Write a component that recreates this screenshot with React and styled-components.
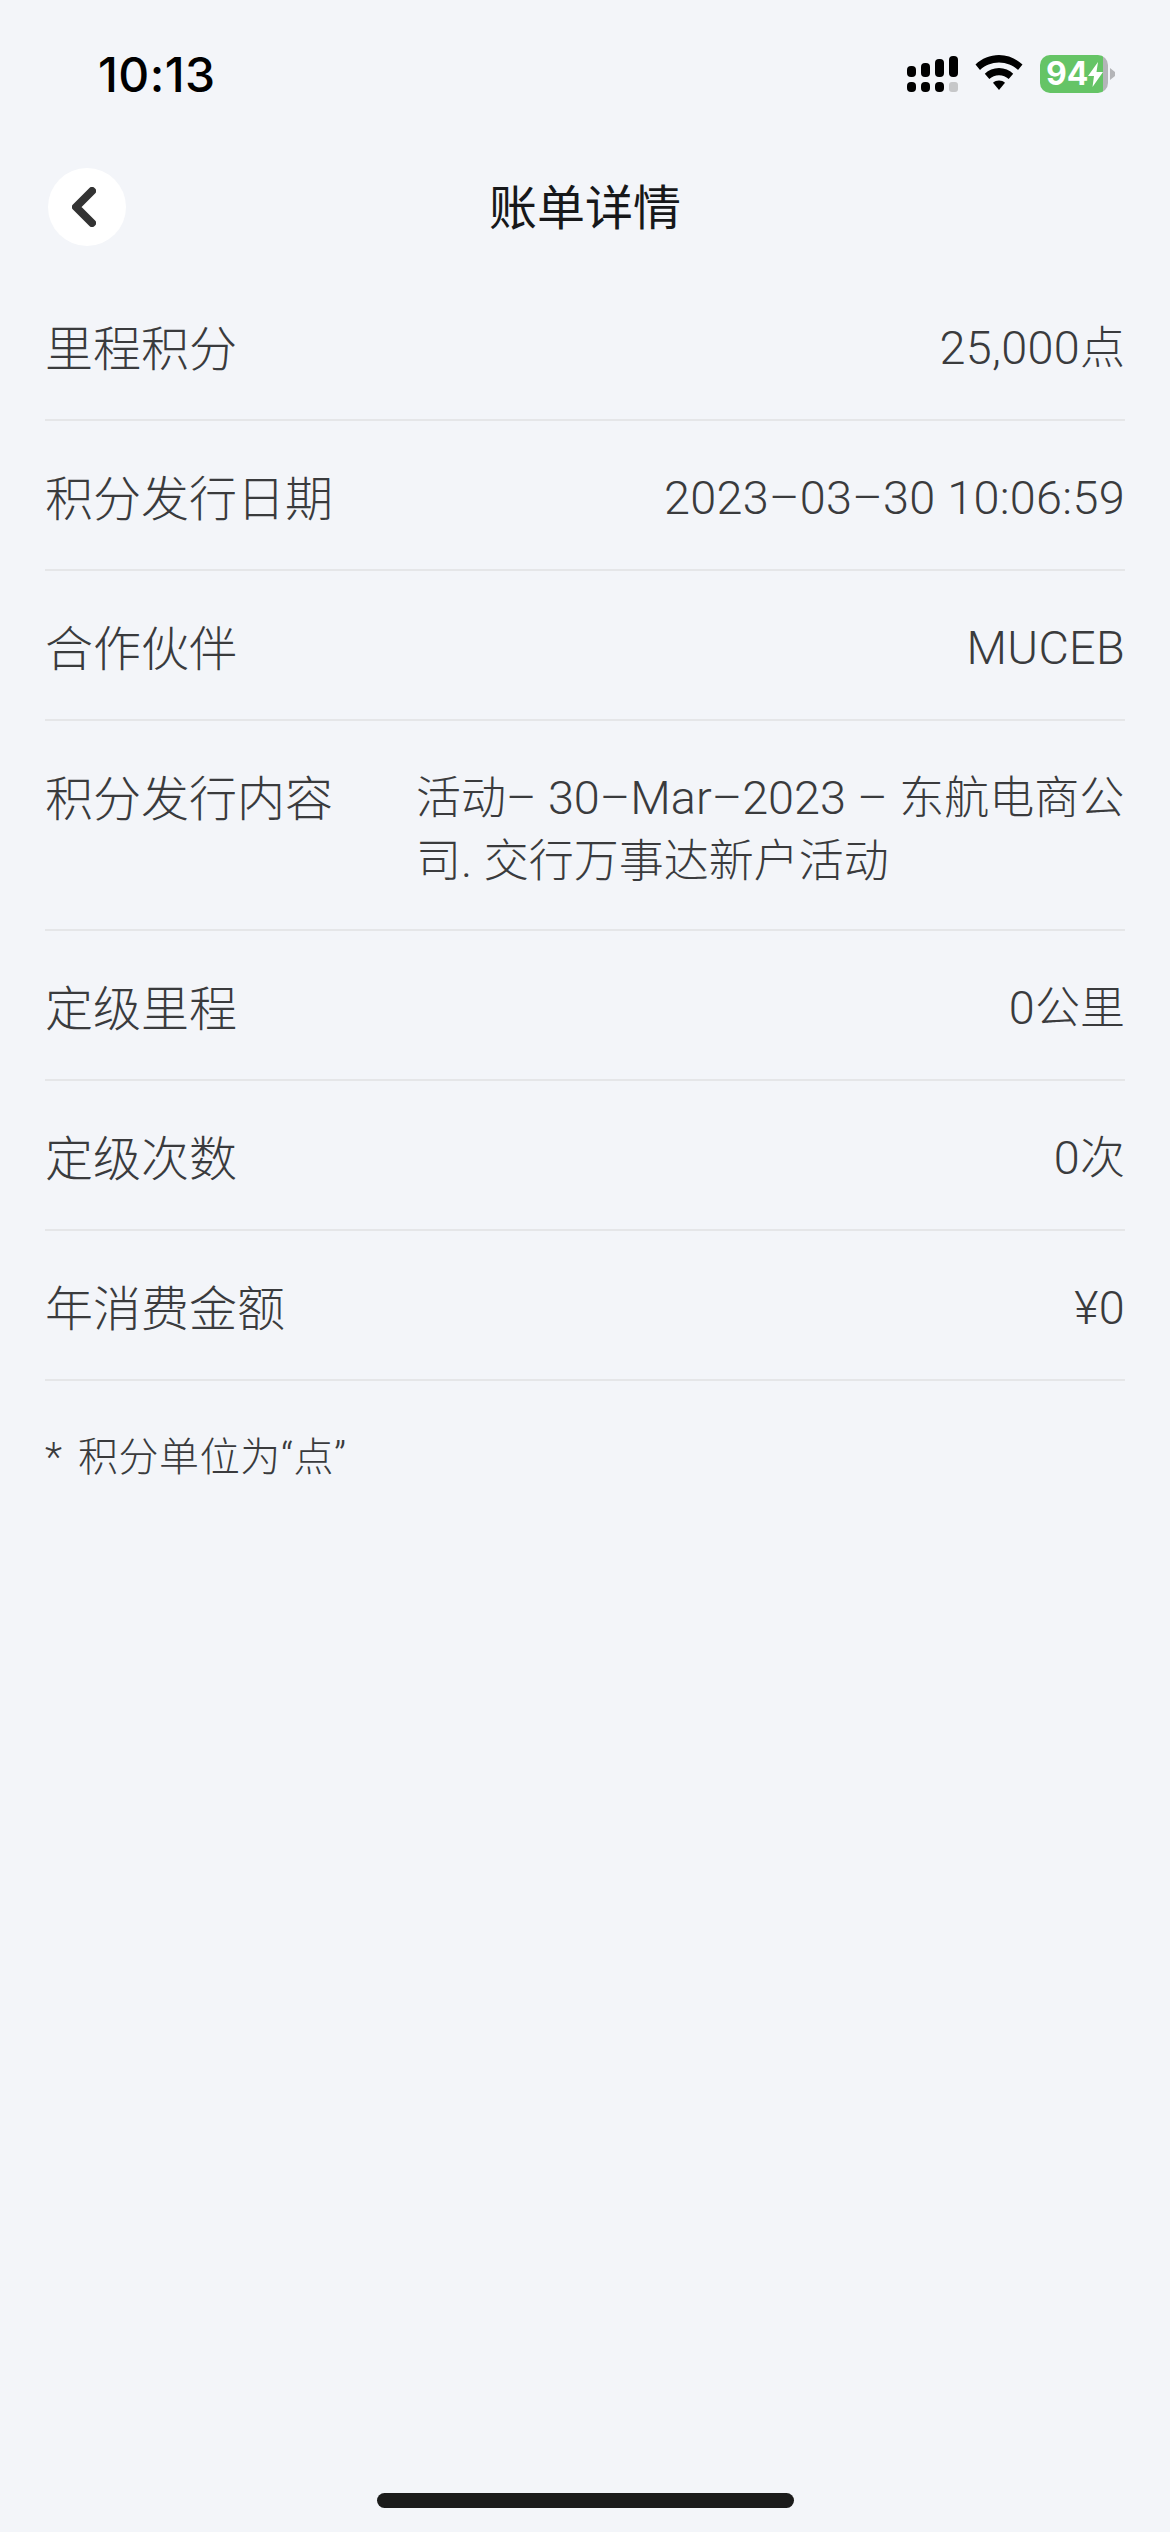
import React from "react";
import styled, { createGlobalStyle } from "styled-components";

const GlobalStyle = createGlobalStyle`
  html, body {
    margin: 0;
    padding: 0;
    background: #f3f5f9;
  }
  * {
    box-sizing: border-box;
  }
`;

const Page = styled.div`
  position: relative;
  width: 1170px;
  height: 2532px;
  background: #f3f5f9;
  overflow: hidden;
  font-family: "Roboto", "Noto Sans CJK SC", sans-serif;
  color: #3a3b3d;
`;

const StatusBar = styled.div`
  height: 150px;
  display: flex;
  justify-content: space-between;
  align-items: flex-start;
  padding: 55px 55px 0 98px;
`;

const Time = styled.div`
  font-family: "Inter", sans-serif;
  font-size: 48px;
  line-height: 40px;
  font-weight: 500;
  letter-spacing: 0.4px;
  color: #000;
`;

const StatusIcons = styled.div`
  display: flex;
  align-items: flex-start;
  gap: 17px;
`;

const Battery = styled.div`
  display: flex;
  align-items: center;
  gap: 2px;
`;

const BatteryBody = styled.div`
  width: 68px;
  height: 38px;
  border-radius: 10px;
  background: linear-gradient(to right, #65c466 93%, #b4b5b8 93%);
  color: #fff;
  display: flex;
  align-items: center;
  padding-left: 6px;
  font-family: "Inter", sans-serif;
  font-size: 32px;
  line-height: 38px;
  font-weight: 700;
`;

const Nav = styled.div`
  position: relative;
  height: 114px;
  display: flex;
  align-items: center;
  justify-content: center;
  padding-top: 4px;
`;

const BackButton = styled.button`
  position: absolute;
  left: 48px;
  top: 18px;
  width: 78px;
  height: 78px;
  border: 0;
  padding: 0 6px 0 0;
  border-radius: 50%;
  background: #fff;
  display: flex;
  align-items: center;
  justify-content: center;
`;

const Title = styled.div`
  font-size: 48px;
  line-height: 64px;
  color: #17181a;
  font-weight: 400;
`;

const List = styled.div`
  padding: 7px 45px 0;
`;

const Row = styled.div`
  display: flex;
  justify-content: space-between;
  align-items: flex-start;
  gap: 83px;
  padding: 46px 0 36px;
  border-bottom: 2px solid #e5e6e8;
`;

const Label = styled.div`
  flex: none;
  font-size: 48px;
  line-height: 66px;
  font-weight: 300;
`;

const Value = styled.div`
  font-size: 46.8px;
  line-height: 63px;
  font-weight: 300;
  letter-spacing: ${(p) => (p.$wrap ? "0" : "0.3px")};
  text-align: ${(p) => (p.$wrap ? "left" : "right")};
`;

const Han = styled.span`
  font-size: 45px;
  line-height: 1;
  letter-spacing: 0;
`;

const Note = styled.div`
  padding: 49px 45px 0;
  font-size: 40px;
  line-height: 56px;
  font-weight: 300;
  letter-spacing: 0.6px;
  word-spacing: 5px;
`;

const HomeIndicator = styled.div`
  position: absolute;
  left: 377px;
  bottom: 24px;
  width: 417px;
  height: 15px;
  border-radius: 8px;
  background: #1b1b1b;
`;

const rows = [
  { label: "里程积分", value: "25,000点" },
  { label: "积分发行日期", value: "2023–03–30 10:06:59" },
  { label: "合作伙伴", value: "MUCEB" },
  {
    label: "积分发行内容",
    value: "活动– 30–Mar–2023 – 东航电商公司. 交行万事达新户活动",
    wrap: true,
  },
  { label: "定级里程", value: "0公里" },
  { label: "定级次数", value: "0次" },
  { label: "年消费金额", value: "¥0" },
];

const splitRuns = (text) =>
  text
    .split(/([\u4e00-\u9fff]{1,5})/)
    .map((run, i) => (i % 2 ? <Han key={i}>{run}</Han> : run));

const SignalIcon = () => (
  <svg width="51" height="38" viewBox="0 0 51 38">
    <g fill="#000">
      <rect x="0" y="11" width="9" height="11" rx="4" />
      <rect x="14" y="8" width="9" height="14" rx="4" />
      <rect x="28" y="4" width="9" height="18" rx="4" />
      <rect x="42" y="1" width="9" height="21" rx="4" />
      <rect x="0" y="27" width="9" height="10" rx="4" />
      <rect x="14" y="27" width="9" height="10" rx="4" />
      <rect x="28" y="27" width="9" height="10" rx="4" />
    </g>
    <rect x="42" y="27" width="9" height="10" rx="3" fill="#c6c7c9" />
  </svg>
);

const WifiIcon = () => (
  <svg width="48" height="36" viewBox="0 0 48 36">
    <path
      d="M24 0C15 0 7 3.500 0.500 9.500L5 15C10 10.300 16.700 7.500 24 7.500S38 10.300 43 15L47.500 9.500C41 3.500 33 0 24 0Z"
      fill="#000"
    />
    <path
      d="M24 13C18.500 13 13.500 15.200 9.800 18.700L14.300 24C16.900 21.700 20.300 20.300 24 20.300S31.100 21.700 33.700 24L38.200 18.700C34.500 15.200 29.500 13 24 13Z"
      fill="#000"
    />
    <path
      d="M24 25.500C21.700 25.500 19.600 26.300 18 27.800L24 35L30 27.800C28.400 26.300 26.300 25.500 24 25.500Z"
      fill="#000"
    />
  </svg>
);

const BoltIcon = () => (
  <svg width="15" height="25" viewBox="0 0 15 25">
    <path d="M10 0L0 14H6L4.500 25L15 10H8.500L10 0Z" fill="#fff" />
  </svg>
);

const BatteryCap = () => (
  <svg width="5" height="12" viewBox="0 0 5 12">
    <path d="M0 0L5 4V8L0 12Z" fill="#b4b5b8" />
  </svg>
);

const ChevronLeft = () => (
  <svg width="24" height="40" viewBox="0 0 24 40">
    <path
      d="M20 4L4 20L20 36"
      fill="none"
      stroke="#333"
      strokeWidth="8"
      strokeLinecap="round"
      strokeLinejoin="round"
    />
  </svg>
);

const App = () => {
  return (
    <Page>
      <GlobalStyle />
      <StatusBar>
        <Time>10:13</Time>
        <StatusIcons>
          <SignalIcon />
          <WifiIcon />
          <Battery>
            <BatteryBody>
              94
              <BoltIcon />
            </BatteryBody>
            <BatteryCap />
          </Battery>
        </StatusIcons>
      </StatusBar>
      <Nav>
        <BackButton aria-label="back">
          <ChevronLeft />
        </BackButton>
        <Title>账单详情</Title>
      </Nav>
      <List>
        {rows.map((row) => (
          <Row key={row.label}>
            <Label>{row.label}</Label>
            <Value $wrap={row.wrap}>{splitRuns(row.value)}</Value>
          </Row>
        ))}
      </List>
      <Note>* 积分单位为“点”</Note>
      <HomeIndicator />
    </Page>
  );
};

export default App;
